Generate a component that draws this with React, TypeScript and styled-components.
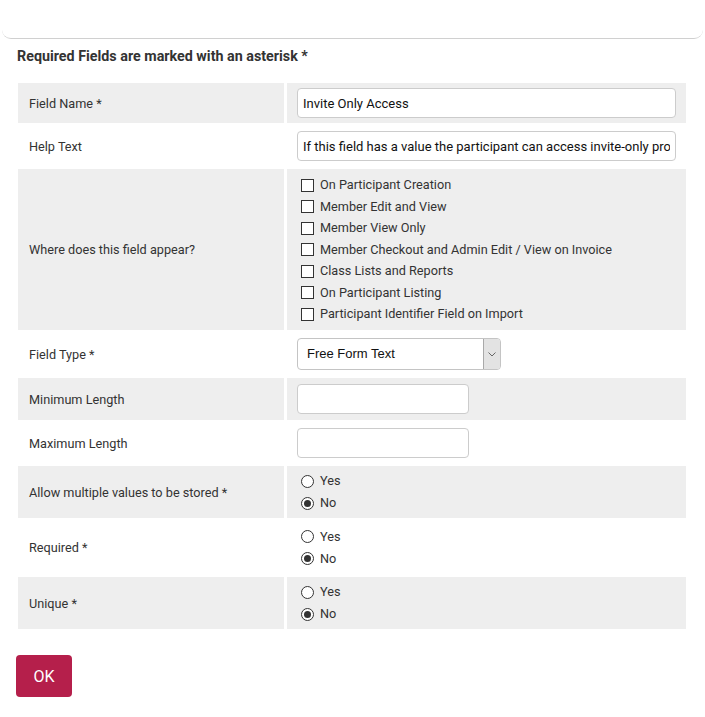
import styled, {createGlobalStyle} from 'styled-components';

const GlobalStyle = createGlobalStyle`
body {
    margin: 0;
    background: #fff;
    font-family: Roboto, "Liberation Sans", sans-serif;
    color: #333;
}
`

const Page = styled.div`
display: flex;
flex-direction: column;
width: 705px;
`

const TopPanel = styled.div`
height: 38px;
margin: 0 2px;
border-bottom: 1px solid #d0d0d0;
border-radius: 0 0 9px 9px;
`

const Body = styled.div`
display: flex;
flex-direction: column;
padding: 9px 18px 0 18px;
`

const Heading = styled.h4`
margin: 0 0 19px -1px;
font-size: 14.3px;
font-weight: bold;
color: #333;
line-height: 16px;
`

const Table = styled.div`
display: flex;
flex-direction: column;
gap: 2px;
width: 668px;
`

const Row = styled.div`
display: grid;
grid-template-columns: 266px 399px;
column-gap: 3px;
`

const Cell = styled.div<{$shaded?: boolean; $pad?: string}>`
display: flex;
flex-direction: column;
justify-content: center;
background: ${p => p.$shaded ? '#eeeeee' : '#ffffff'};
padding: ${p => p.$pad || '6px'} 10px;
`

const LabelCell = styled(Cell)`
padding-left: 11px;
font-size: 12.7px;
color: #333;
`

const TextInput = styled.input<{$short?: boolean}>`
box-sizing: border-box;
width: ${p => p.$short ? '172px' : '379px'};
height: 30px;
border: 1px solid #cccccc;
border-radius: 4px;
padding: 0 5px;
font-family: Roboto, "Liberation Sans", sans-serif;
font-size: 13px;
color: #111;
background: #fff;
outline: none;
`

const SelectWrap = styled.div`
position: relative;
width: 204px;
height: 32px;
`

const Select = styled.select`
box-sizing: border-box;
appearance: none;
width: 100%;
height: 100%;
border: 1px solid #c4c4c4;
border-radius: 4px;
padding: 0 24px 2px 9px;
font-family: "Liberation Sans", Arial, sans-serif;
font-size: 13px;
color: #111;
background: #fff;
outline: none;
`

const SelectArrow = styled.span`
position: absolute;
top: 1px;
right: 1px;
bottom: 1px;
width: 16px;
display: flex;
align-items: center;
justify-content: center;
background: #e3e3e3;
border-left: 1px solid #a9a9a9;
border-radius: 0 3px 3px 0;
pointer-events: none;
`

const OptionList = styled.div<{$gap: number}>`
display: flex;
flex-direction: column;
gap: ${p => p.$gap}px;
padding-left: 4px;
`

const Option = styled.label`
display: flex;
align-items: center;
gap: 6px;
font-size: 12.7px;
color: #333;
line-height: 16px;
`

const Check = styled.input`
appearance: none;
margin: 0;
width: 13px;
height: 13px;
border: 1px solid #333;
background: #fff;
box-sizing: border-box;
`

const Radio = styled.input`
appearance: none;
margin: 0;
width: 13px;
height: 13px;
border: 1px solid #333;
border-radius: 50%;
background: #fff;
box-sizing: border-box;
display: grid;
place-items: center;

&:checked::after {
    content: '';
    width: 7px;
    height: 7px;
    border-radius: 50%;
    background: #333;
}
`

const OkButton = styled.button`
align-self: flex-start;
margin: 26px 0 0 -2px;
width: 56px;
height: 42px;
border: 0;
border-radius: 4px;
background: #b51f4b;
color: #fff;
font-family: Roboto, "Liberation Sans", sans-serif;
font-size: 16px;
cursor: pointer;
`

const appearOptions = [
    'On Participant Creation',
    'Member Edit and View',
    'Member View Only',
    'Member Checkout and Admin Edit / View on Invoice',
    'Class Lists and Reports',
    'On Participant Listing',
    'Participant Identifier Field on Import',
]

type YesNoProps = {
    name: string;
}

function YesNo({name}: YesNoProps) {
    return (
        <OptionList $gap={6}>
            <Option><Radio type="radio" name={name} />Yes</Option>
            <Option><Radio type="radio" name={name} defaultChecked />No</Option>
        </OptionList>
    );
}

export default function App() {
    return (
        <Page>
            <GlobalStyle />
            <TopPanel />
            <Body>
                <Heading>Required Fields are marked with an asterisk *</Heading>
                <Table>
                    <Row>
                        <LabelCell $shaded>Field Name *</LabelCell>
                        <Cell $shaded $pad="5px"><TextInput defaultValue="Invite Only Access" /></Cell>
                    </Row>
                    <Row>
                        <LabelCell>Help Text</LabelCell>
                        <Cell $pad="6px"><TextInput defaultValue="If this field has a value the participant can access invite-only programs" /></Cell>
                    </Row>
                    <Row>
                        <LabelCell $shaded>Where does this field appear?</LabelCell>
                        <Cell $shaded $pad="8px">
                            <OptionList $gap={5.5}>
                                {appearOptions.map(o => (
                                    <Option key={o}><Check type="checkbox" />{o}</Option>
                                ))}
                            </OptionList>
                        </Cell>
                    </Row>
                    <Row>
                        <LabelCell>Field Type *</LabelCell>
                        <Cell $pad="6px">
                            <SelectWrap>
                                <Select defaultValue="text">
                                    <option value="text">Free Form Text</option>
                                </Select>
                                <SelectArrow>
                                    <svg width="8" height="5" viewBox="0 0 8 5">
                                        <path d="M0.5 0.5 L4 4 L7.5 0.5" fill="none" stroke="#666" strokeWidth="1" />
                                    </svg>
                                </SelectArrow>
                            </SelectWrap>
                        </Cell>
                    </Row>
                    <Row>
                        <LabelCell $shaded>Minimum Length</LabelCell>
                        <Cell $shaded $pad="6px"><TextInput $short /></Cell>
                    </Row>
                    <Row>
                        <LabelCell>Maximum Length</LabelCell>
                        <Cell $pad="6px"><TextInput $short /></Cell>
                    </Row>
                    <Row>
                        <LabelCell $shaded>Allow multiple values to be stored *</LabelCell>
                        <Cell $shaded $pad="7px"><YesNo name="multi" /></Cell>
                    </Row>
                    <Row>
                        <LabelCell>Required *</LabelCell>
                        <Cell $pad="8.5px"><YesNo name="required" /></Cell>
                    </Row>
                    <Row>
                        <LabelCell $shaded>Unique *</LabelCell>
                        <Cell $shaded $pad="7px"><YesNo name="unique" /></Cell>
                    </Row>
                </Table>
                <OkButton>OK</OkButton>
            </Body>
        </Page>
    );
}
